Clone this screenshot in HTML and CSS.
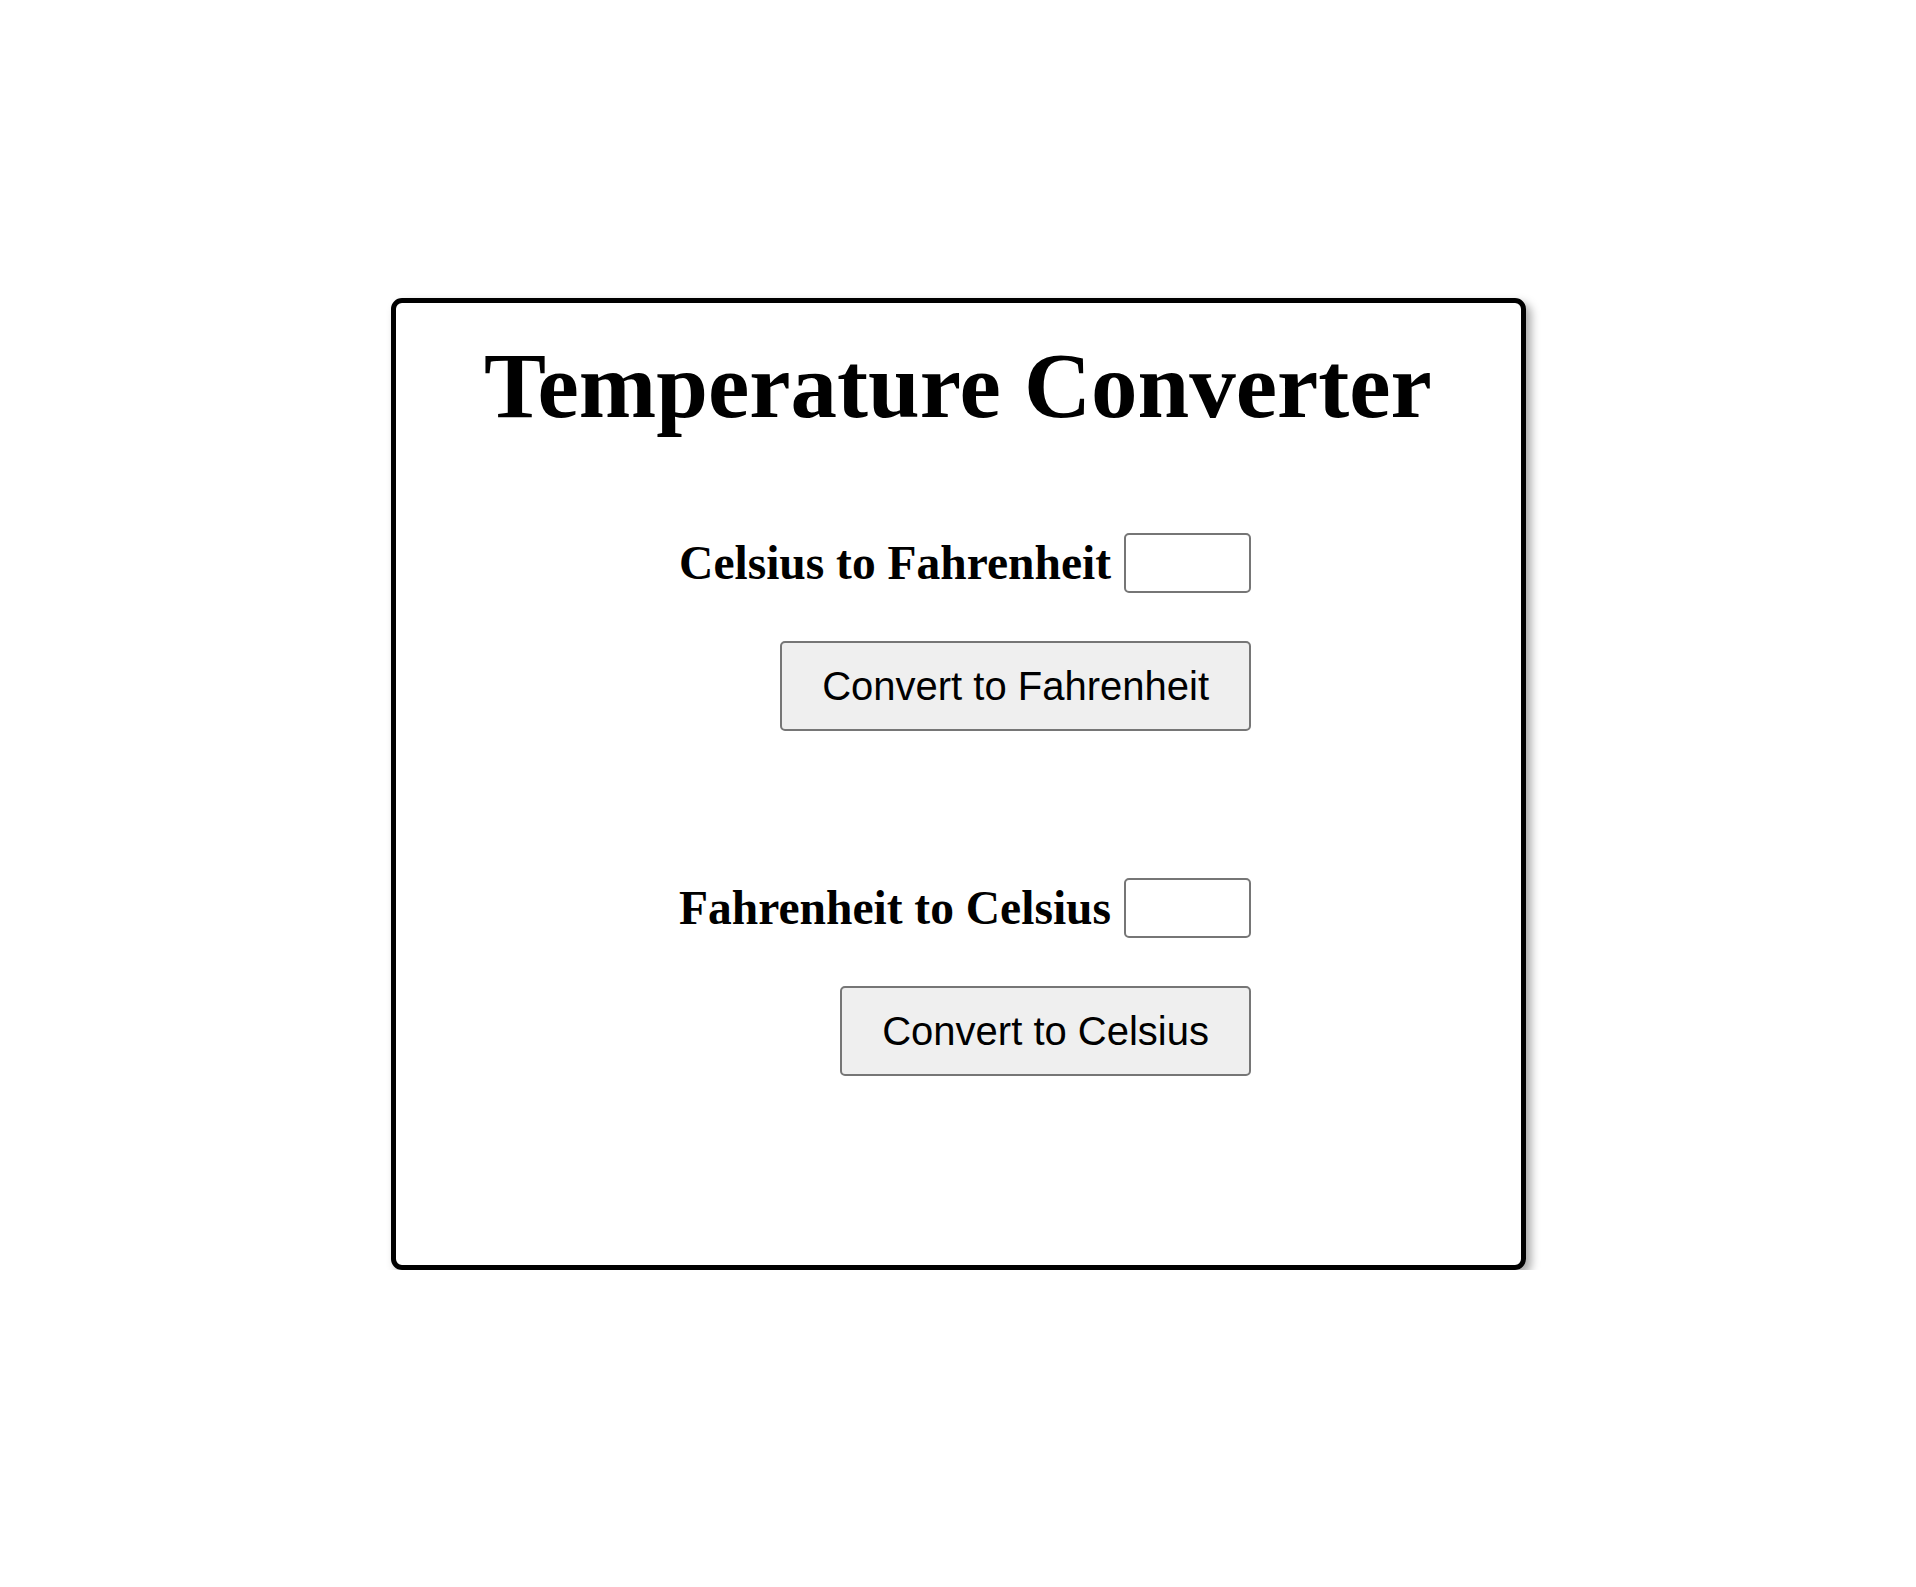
FILE: index.html
```html
<!DOCTYPE html>
<html lang="en">
<head>
    <meta charset="UTF-8">
    <meta name="viewport" content="width=device-width, initial-scale=1.0">
    <title>Temperature Converter</title>
    <link rel="stylesheet" href="styles.css">
</head>
<body>
    <div class="container">
        <h1>Temperature Converter</h1>
        <div class="converter">
            <div class="row">
                <label for="celsius">Celsius to Fahrenheit</label>
                <input type="text" id="celsius">
            </div>
            <div class="row">
                <button onclick="toFahrenheit()">Convert to Fahrenheit</button>
            </div>
        </div>
        <div class="converter second">
            <div class="row">
                <label for="fahrenheit">Fahrenheit to Celsius</label>
                <input type="text" id="fahrenheit">
            </div>
            <div class="row">
                <button onclick="toCelsius()">Convert to Celsius</button>
            </div>
        </div>
    </div>

    <script>
        function toFahrenheit() {
            const c = parseFloat(document.getElementById('celsius').value);
            if (isNaN(c)) return;
            document.getElementById('fahrenheit').value = (c * 9 / 5 + 32).toFixed(2);
        }

        function toCelsius() {
            const f = parseFloat(document.getElementById('fahrenheit').value);
            if (isNaN(f)) return;
            document.getElementById('celsius').value = ((f - 32) * 5 / 9).toFixed(2);
        }
    </script>
</body>
</html>
```

FILE: styles.css
```css
body {
    font-family: "Liberation Serif", "Times New Roman", serif;
    background: #fff;
    margin: 0;
    color: #000;
}
.container {
    box-sizing: border-box;
    width: 1135px;
    height: 972px;
    margin: 298px auto 0;
    border: 5px solid #000;
    border-radius: 11px;
    box-shadow: 5px 5px 10px rgba(0, 0, 0, 0.35);
    padding-top: 32px;
}
h1 {
    margin: 0;
    font-size: 93px;
    font-weight: bold;
    text-align: center;
    line-height: 102px;
}
.converter {
    width: 586px;
    margin: 96px auto 0;
}
.converter.second {
    margin-top: 147px;
}
.row {
    display: flex;
    justify-content: flex-end;
    align-items: center;
}
.row + .row {
    margin-top: 48px;
}
label {
    font-size: 47.5px;
    font-weight: bold;
    line-height: 54px;
    margin-right: 13px;
}
input[type='text'] {
    box-sizing: border-box;
    width: 127px;
    height: 60px;
    border: 2px solid #767676;
    border-radius: 5px;
    background: #fff;
    font-size: 30px;
    padding: 0 6px;
}
button {
    font-family: "Liberation Sans", Arial, sans-serif;
    font-size: 40px;
    line-height: 46px;
    padding: 20px 40px;
    background: #efefef;
    border: 2px solid #767676;
    border-radius: 5px;
    color: #000;
    cursor: pointer;
}
button:hover {
    background: #e5e5e5;
}
```
